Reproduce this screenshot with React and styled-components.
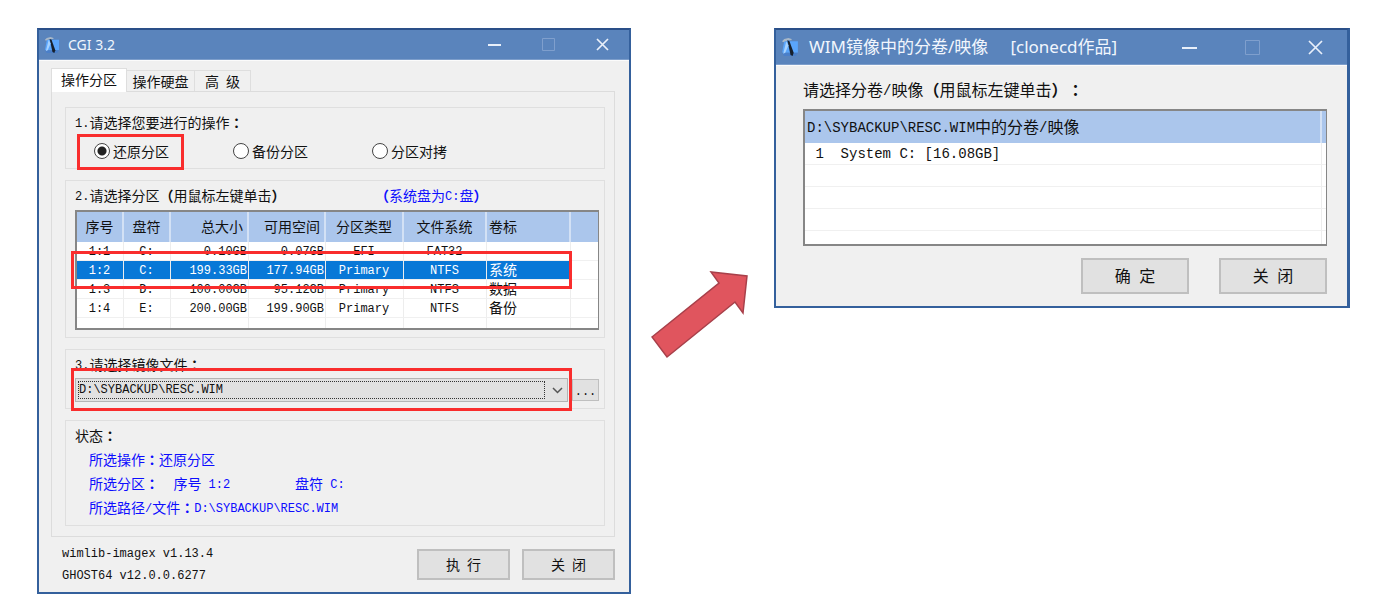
import React from "react";
import styled, { createGlobalStyle, css } from "styled-components";

const GlobalStyle = createGlobalStyle`
  *, *::before, *::after { box-sizing: border-box; }
  body { margin: 0; background: #fff; text-spacing-trim: space-all; }
  button, select, input { font: inherit; color: inherit; margin: 0; }
`;

const Page = styled.main`
  display: grid;
  grid-template-columns: minmax(0, 594fr) minmax(0, 143fr) minmax(0, 576fr);
  align-items: start;
  padding: 28px 49px 10px 37px;
`;

const Window = styled.section`
  --cjk: ${(p) => (p.$large ? 16 : 14)}px;
  --latin: ${(p) => (p.$large ? 14 : 12)}px;
  border: 2px solid #34609c;
  border-top-color: #2a4f88;
  border-right-width: ${(p) => (p.$large ? 3 : 2)}px;
  background: #f0f0f0;
  color: #111;
  font-family: "Noto Sans CJK SC", sans-serif;
  font-size: var(--cjk);
  line-height: 24px;
  white-space: nowrap;
`;

const TitleBar = styled.header`
  display: flex;
  align-items: center;
  height: ${(p) => (p.$large ? 35 : 30)}px;
  padding-left: 5px;
  background: #5a84bc;
  border-bottom: 1px solid #7d9ecb;
  box-shadow: 0 1px 0 #fbfbfb;
  color: #f1f6fd;
`;

const Title = styled.h1`
  flex: 1;
  min-width: 0;
  margin: 0 0 0 ${(p) => (p.$large ? 10 : 8)}px;
  font: 400 ${(p) => (p.$large ? 17 : 14)}px / 24px "Noto Sans", "Noto Sans CJK SC", sans-serif;
  white-space: pre;
`;

const CaptionButton = styled.button`
  display: grid;
  place-items: center;
  width: ${(p) => (p.$large ? 63 : 54)}px;
  height: 28px;
  padding: 0;
  border: 0;
  background: none;
  color: ${(p) => (p.disabled ? "#7f9fcd" : "#e9f0fa")};
`;

const Latin = styled.span`
  font-family: "Liberation Mono", monospace;
  font-size: var(--latin);
  line-height: 0;
  vertical-align: 1px;
  white-space: pre;
`;

const Colon = styled.span`
  font-family: "Noto Sans CJK TC", sans-serif;
  font-weight: 700;
  line-height: 0;
`;

const Paren = styled.span`
  font-weight: 700;
  line-height: 0;
`;

const Body = styled.div`
  padding: ${(p) => (p.$large ? "12px 20px 12px 27px" : "8px 14px 7px 12px")};
`;

const TabList = styled.div`
  display: flex;
  align-items: flex-end;
  height: 23px;
`;

const Tab = styled.button`
  width: ${(p) => p.$width}px;
  height: 21px;
  padding: 0;
  border: 1px solid #dedede;
  border-width: 1px 1px 0 0;
  background: #f0f0f0;
  line-height: 20px;
  ${(p) =>
    p["aria-selected"] &&
    css`
      height: 24px;
      margin-bottom: -1px;
      padding-bottom: 3px;
      border-left-width: 1px;
      background: #fff;
      z-index: 1;
    `}
`;

const Panel = styled.div`
  display: flex;
  flex-direction: column;
  gap: 11px;
  padding: 15px 9px 10px 13px;
  border: 1px solid #dcdcdc;
`;

const Group = styled.section`
  padding: 2px 5px ${(p) => p.$bottom}px 9px;
  border: 1px solid #dfdfdf;
`;

const GroupHead = styled.div`
  display: grid;
  grid-template-columns: 300px 1fr;
`;

const Line = styled.p`
  display: block;
  margin: 0;
  padding-left: ${(p) => (p.$indent ? 14 : 0)}px;
  color: ${(p) => (p.$blue ? "#0d0dff" : "inherit")};
  white-space: pre;
`;

const Choices = styled.div`
  display: grid;
  grid-template-columns: repeat(3, 139px);
  align-items: center;
  height: 32px;
  margin-top: 1px;
  padding-left: 19px;
`;

const Choice = styled.label`
  position: relative;
  display: flex;
  align-items: center;
  gap: 3px;
  justify-self: start;
`;

const Radio = styled.input`
  appearance: none;
  width: 16px;
  height: 16px;
  border: 1px solid #444;
  border-radius: 50%;
  background: #fff;
  &:checked {
    background: radial-gradient(circle, #222 0 4px, #fff 5px);
  }
`;

const Highlight = styled.span`
  position: absolute;
  inset: ${(p) => p.$inset};
  border: 3px solid #f92d2d;
  pointer-events: none;
`;

const ListBox = styled.div`
  position: relative;
  height: ${(p) => p.$height}px;
  margin-top: ${(p) => p.$top}px;
  border: 2px solid #868686;
  border-right-width: 1px;
  background: #fff;
`;

const ListTable = styled.table`
  width: 100%;
  height: 100%;
  table-layout: fixed;
  border-collapse: separate;
  border-spacing: 0;
`;

const Row = styled.tr`
  height: ${(p) => (p.$height ? `${p.$height}px` : "auto")};
  line-height: ${(p) => (p.$height ? p.$height - 3 : 8)}px;
`;

const cell = css`
  padding: 0 ${(p) => (p.$align === "right" ? 1 : 3)}px 2px 2px;
  text-align: ${(p) => p.$align || "left"};
  border-right: 1px solid #ededed;
  font-weight: 400;
  white-space: pre;
  &:last-child { border-right: 0; }
`;

const HeadCell = styled.th`
  ${cell}
  padding-right: ${(p) => (p.$align === "right" ? 4 : 2)}px;
  background: #abc6ec;
  border-right: 2px solid #d3e1f5;
`;

const Cell = styled.td`
  ${cell}
  border-bottom: ${(p) => (p.$last ? 0 : 1)}px solid #f0f0f0;
  ${(p) =>
    p.$selected &&
    css`
      &:not(:last-child) {
        background: #0878d7;
        color: #fff;
      }
    `}
`;

const FileRow = styled.div`
  position: relative;
  display: flex;
  align-items: center;
  gap: 4px;
  margin-top: 2px;
`;

const SelectBox = styled.div`
  position: relative;
  flex: 1;
  height: 24px;
  & > svg { position: absolute; right: 5px; top: 9px; pointer-events: none; }
  &::after {
    content: "";
    position: absolute;
    inset: 3px 23px 3px 3px;
    border: 1px dotted #333;
    pointer-events: none;
  }
`;

const Select = styled.select`
  display: block;
  appearance: none;
  width: 100%;
  height: 24px;
  padding: 0 24px 0 3px;
  border: 1px solid #b4b4b4;
  border-radius: 0;
  background: #e1e1e1;
  font: var(--latin) / 20px "Liberation Mono", monospace;
`;

const PushButton = styled.button`
  width: ${(p) => p.$width}px;
  height: ${(p) => p.$height}px;
  padding: 0 0 2px;
  border: ${(p) => (p.$thin ? 1 : 2)}px solid #bfbfbf;
  background: #e1e1e1;
  line-height: 20px;
  text-align: center;
  white-space: pre;
`;

const Footer = styled.footer`
  display: flex;
  justify-content: space-between;
  padding: 4px 0 0 11px;
  line-height: 22px;
`;

const Actions = styled.div`
  display: flex;
  justify-content: flex-end;
  gap: ${(p) => (p.$large ? 30 : 12)}px;
  padding-top: ${(p) => (p.$large ? 12 : 8)}px;
`;

const ArrowSlot = styled.div`
  padding: 242px 0 0 19px;
`;

/* Splits a label into Chinese, Latin and full-width punctuation runs. */
function Mixed({ children }) {
  const runs = children.match(/[\x20-\x7e]+|：|[（）]|[^\x20-\x7e：（）]+/g) || [];
  return runs.map((run, i) => {
    if (run === "：") return <Colon key={i}>{run}</Colon>;
    if (/[（）]/.test(run)) return <Paren key={i}>{run}</Paren>;
    if (/^[\x20-\x7e]/.test(run)) return <Latin key={i}>{run}</Latin>;
    return <React.Fragment key={i}>{run}</React.Fragment>;
  });
}

function AppIcon({ size }) {
  return (
    <svg width={size} height={size + 2} viewBox="0 0 17 19" aria-hidden="true">
      <path d="M3 4h13v11H1z" fill="#5aa5fb" />
      <path d="M1 15h15l-2 3H3z" fill="#4a7fc9" />
      <path d="M1 4l2-2 4-1 3 1v1L7 3 4 4 2 5z" fill="#a9b8c8" />
      <path d="M6 3l2 1 4 11-1 3-2-1z" fill="#17202c" />
      <path d="M5 4l2 4-3 7-2 1z" fill="#a6d2ff" />
    </svg>
  );
}

function Caption({ title, large }) {
  const s = large ? 15 : 13;
  const e = s - 1;
  return (
    <TitleBar $large={large}>
      <AppIcon size={large ? 18 : 16} />
      <Title $large={large}>{title}</Title>
      <CaptionButton type="button" $large={large} aria-label="最小化">
        <svg width={s} height={s} fill="none" stroke="currentColor" strokeWidth="2">
          <path d={`M0 ${(s >> 1) + 1}h${s}`} />
        </svg>
      </CaptionButton>
      <CaptionButton type="button" $large={large} aria-label="最大化" disabled>
        <svg width={s} height={s} fill="none" stroke="currentColor">
          <path d={`M.5 .5h${e}v${e}h-${e}z`} />
        </svg>
      </CaptionButton>
      <CaptionButton type="button" $large={large} aria-label="关闭">
        <svg width={s} height={s} fill="none" stroke="currentColor" strokeWidth="1.7">
          <path d={`M1 1L${e} ${e}M${e} 1L1 ${e}`} />
        </svg>
      </CaptionButton>
    </TitleBar>
  );
}

const columns = [
  { name: "序号", width: 47, align: "center" },
  { name: "盘符", width: 47, align: "center" },
  { name: "总大小", width: 78, align: "right" },
  { name: "可用空间", width: 77, align: "right" },
  { name: "分区类型", width: 78, align: "center" },
  { name: "文件系统", width: 83, align: "center" },
  { name: "卷标", width: 84, align: "left" },
  { name: "", align: "left" },
];

const partitions = [
  ["1:1", "C:", "0.10GB", "0.07GB", "EFI", "FAT32", "", ""],
  ["1:2", "C:", "199.33GB", "177.94GB", "Primary", "NTFS", "系统", ""],
  ["1:3", "D:", "100.00GB", "95.12GB", "Primary", "NTFS", "数据", ""],
  ["1:4", "E:", "200.00GB", "199.90GB", "Primary", "NTFS", "备份", ""],
];

function PartitionTable() {
  return (
    <ListBox $height={120} $top={3}>
      <ListTable>
        <colgroup>
          {columns.map((c, i) => (
            <col key={i} width={c.width} />
          ))}
        </colgroup>
        <thead>
          <Row $height={30}>
            {columns.map((c, i) => (
              <HeadCell key={i} $align={c.align}>{c.name}</HeadCell>
            ))}
          </Row>
        </thead>
        <tbody>
          {partitions.map((row) => (
            <Row key={row[0]} $height={19}>
              {row.map((text, i) => (
                <Cell key={i} $align={columns[i].align} $selected={row[0] === "1:2"}>
                  <Mixed>{text}</Mixed>
                </Cell>
              ))}
            </Row>
          ))}
          <Row>
            {columns.map((c, i) => (
              <Cell key={i} $last />
            ))}
          </Row>
        </tbody>
      </ListTable>
      <Highlight $inset="39px 26px 39px -6px" />
    </ListBox>
  );
}

function MainWindow() {
  return (
    <Window>
      <Caption title="CGI 3.2" />
      <Body>
        <TabList role="tablist">
          <Tab type="button" role="tab" aria-selected={true} $width={76}>操作分区</Tab>
          <Tab type="button" role="tab" aria-selected={false} $width={68}>操作硬盘</Tab>
          <Tab type="button" role="tab" aria-selected={false} $width={56}><Mixed>高 级</Mixed></Tab>
        </TabList>
        <Panel role="tabpanel">
          <Group $bottom={1}>
            <Line><Mixed>1.请选择您要进行的操作：</Mixed></Line>
            <Choices role="radiogroup" aria-label="操作">
              <Choice>
                <Radio type="radio" name="operation" defaultChecked />
                还原分区
                <Highlight $inset="-5px -15px -7px -17px" />
              </Choice>
              <Choice><Radio type="radio" name="operation" />备份分区</Choice>
              <Choice><Radio type="radio" name="operation" />分区对拷</Choice>
            </Choices>
          </Group>
          <Group $bottom={7}>
            <GroupHead>
              <Line><Mixed>2.请选择分区（用鼠标左键单击）</Mixed></Line>
              <Line $blue><Mixed>（系统盘为C:盘）</Mixed></Line>
            </GroupHead>
            <PartitionTable />
          </Group>
          <Group $bottom={6}>
            <Line as="label" htmlFor="image-file">
              <Mixed>3.请选择镜像文件：</Mixed>
            </Line>
            <FileRow>
              <SelectBox>
                <Select id="image-file" defaultValue="resc">
                  <option value="resc">D:\SYBACKUP\RESC.WIM</option>
                </Select>
                <svg width="11" height="7" fill="none" stroke="#555" strokeWidth="1.5" aria-hidden="true">
                  <path d="M1 1l4.500 4.500L10 1" />
                </svg>
              </SelectBox>
              <PushButton type="button" aria-label="浏览" $width={27} $height={22} $thin>
                <Latin>...</Latin>
              </PushButton>
              <Highlight $inset="-10px 27px -9px -4px" />
            </FileRow>
          </Group>
          <Group $bottom={6}>
            <Line><Mixed>状态：</Mixed></Line>
            <Line $blue $indent><Mixed>所选操作：还原分区</Mixed></Line>
            <Line $blue $indent><Mixed>{"所选分区：  序号 1:2         盘符 C:"}</Mixed></Line>
            <Line $blue $indent><Mixed>{"所选路径/文件：D:\\SYBACKUP\\RESC.WIM"}</Mixed></Line>
          </Group>
        </Panel>
        <Footer>
          <div>
            <Line><Latin>wimlib-imagex v1.13.4</Latin></Line>
            <Line><Latin>GHOST64 v12.0.0.6277</Latin></Line>
          </div>
          <Actions>
            <PushButton type="button" $width={93} $height={31}><Mixed>执 行</Mixed></PushButton>
            <PushButton type="button" $width={93} $height={31}><Mixed>关 闭</Mixed></PushButton>
          </Actions>
        </Footer>
      </Body>
    </Window>
  );
}

function ImageWindow() {
  return (
    <Window $large>
      <Caption large title={"WIM镜像中的分卷/映像     [clonecd作品]"} />
      <Body $large>
        <Line><Mixed>请选择分卷/映像（用鼠标左键单击）：</Mixed></Line>
        <ListBox $height={137} $top={8}>
          <ListTable>
            <colgroup>
              <col />
              <col width="4" />
            </colgroup>
            <thead>
              <Row $height={32}>
                <HeadCell><Mixed>{"D:\\SYBACKUP\\RESC.WIM中的分卷/映像"}</Mixed></HeadCell>
                <HeadCell />
              </Row>
            </thead>
            <tbody>
              <Row $height={22}>
                <Cell><Mixed>{" 1  System C: [16.08GB]"}</Mixed></Cell>
                <Cell />
              </Row>
              {[2, 3, 4].map((n) => (
                <Row key={n} $height={22}><Cell /><Cell /></Row>
              ))}
              <Row><Cell $last /><Cell $last /></Row>
            </tbody>
          </ListTable>
        </ListBox>
        <Actions $large>
          <PushButton type="button" $width={108} $height={36}><Mixed>确 定</Mixed></PushButton>
          <PushButton type="button" $width={108} $height={36}><Mixed>关 闭</Mixed></PushButton>
        </Actions>
      </Body>
    </Window>
  );
}

export default function App() {
  return (
    <>
      <GlobalStyle />
      <Page>
        <MainWindow />
        <ArrowSlot>
          <svg width="100" height="90" viewBox="0 0 100 90" aria-hidden="true">
            <path d="M2 67L69 13L61 2L97 6L93 43L85 32L17 87Z" fill="#e0555e" stroke="#a8404a" strokeWidth="1.5" />
          </svg>
        </ArrowSlot>
        <ImageWindow />
      </Page>
    </>
  );
}
